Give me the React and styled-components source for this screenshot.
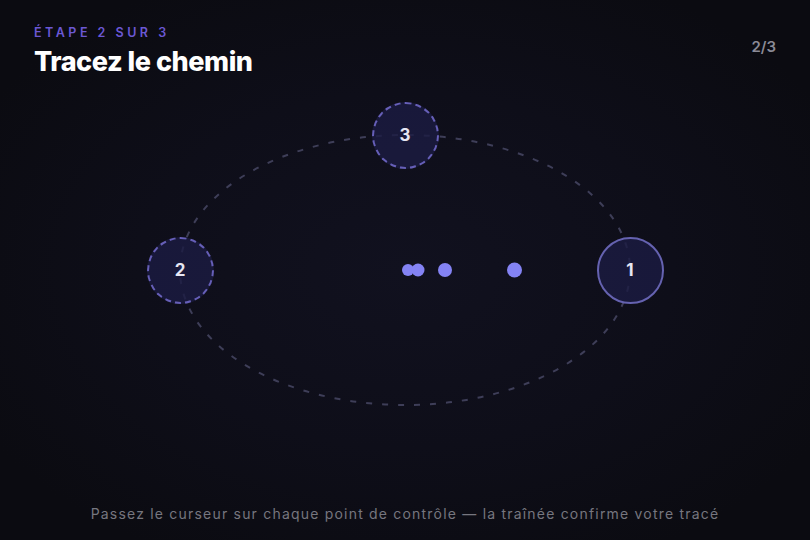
import React from 'react'
import styled, { createGlobalStyle } from 'styled-components'

const GlobalStyle = createGlobalStyle`
  html, body {
    margin: 0;
    padding: 0;
    background: #0b0b12;
  }
  * { box-sizing: border-box; }
`

const Page = styled.div`
  position: relative;
  width: 810px;
  height: 540px;
  overflow: hidden;
  display: flex;
  flex-direction: column;
  font-family: Inter, 'Noto Sans', sans-serif;
  background: radial-gradient(ellipse 60% 60% at 50% 50%, #11111f 0%, #0e0e19 55%, #0b0b11 100%);
`

const Header = styled.header`
  display: flex;
  justify-content: space-between;
  align-items: flex-start;
  padding: 26px 34px 0 34px;
  position: relative;
  z-index: 2;
`

const Step = styled.div`
  font-size: 12.5px;
  font-weight: 600;
  letter-spacing: 3.5px;
  color: #6b58d4;
  line-height: 14px;
`

const Title = styled.h1`
  margin: 6px 0 0 0;
  font-size: 27px;
  font-weight: 800;
  letter-spacing: -0.45px;
  color: #ffffff;
  line-height: 32px;
`

const Counter = styled.div`
  margin-top: 11px;
  font-size: 15px;
  font-weight: 600;
  color: #8a8a96;
`

const Canvas = styled.div`
  position: absolute;
  inset: 0;
  z-index: 1;
`

const PathLayer = styled.svg`
  position: absolute;
  inset: 0;
  width: 100%;
  height: 100%;
`

const Node = styled.div`
  position: absolute;
  width: 67px;
  height: 67px;
  margin: -33.5px 0 0 -33.5px;
  border-radius: 50%;
  border: ${p => (p.$active ? '2.5px solid #6562b0' : '2.5px dashed #665fb8')};
  background: rgba(28, 28, 66, 0.8);
  display: flex;
  align-items: center;
  justify-content: center;
  font-size: 17px;
  font-weight: 700;
  color: #e6e6f2;
`

const Hint = styled.footer`
  margin-top: auto;
  padding-bottom: 18px;
  text-align: center;
  font-size: 14px;
  letter-spacing: 1.2px;
  color: #76767f;
  position: relative;
  z-index: 2;
`

const nodes = [
  { n: 1, x: 630, y: 270, active: true },
  { n: 2, x: 180, y: 270 },
  { n: 3, x: 405, y: 135 },
]

const trail = [
  { x: 408, y: 270, r: 6 },
  { x: 418, y: 270, r: 6.5 },
  { x: 445, y: 270, r: 7 },
  { x: 514.5, y: 270, r: 7.5 },
]

export default function App() {
  return (
    <Page>
      <GlobalStyle />
      <Canvas>
        <PathLayer viewBox="0 0 810 540">
          <ellipse
            cx="405"
            cy="270"
            rx="225"
            ry="135"
            fill="none"
            stroke="#3e3e58"
            strokeWidth="2"
            strokeDasharray="6 10"
          />
        </PathLayer>
        {nodes.map(nd => (
          <Node key={nd.n} $active={nd.active} style={{ left: nd.x, top: nd.y }}>
            {nd.n}
          </Node>
        ))}
        <PathLayer viewBox="0 0 810 540">
          {trail.map((d, i) => (
            <circle key={i} cx={d.x} cy={d.y} r={d.r} fill="#8483f4" />
          ))}
        </PathLayer>
      </Canvas>
      <Header>
        <div>
          <Step>ÉTAPE 2 SUR 3</Step>
          <Title>Tracez le chemin</Title>
        </div>
        <Counter>2/3</Counter>
      </Header>
      <Hint>Passez le curseur sur chaque point de contrôle — la traînée confirme votre tracé</Hint>
    </Page>
  )
}
